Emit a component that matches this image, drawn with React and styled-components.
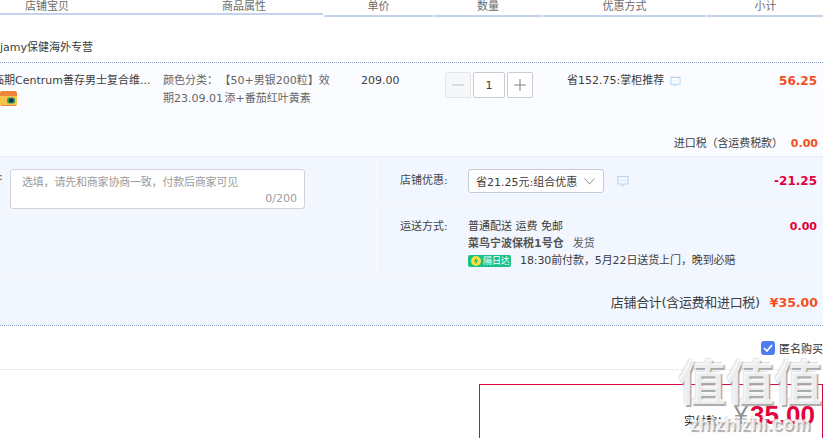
import React from "react";
import styled, { createGlobalStyle } from "styled-components";

const Global = createGlobalStyle`
  html, body { margin: 0; padding: 0; background: #fff; overflow: hidden; height: 438px; }
  body { font-family: "DejaVu Sans", "Noto Sans CJK SC", sans-serif; font-size: 11px; color: #3c3c3c; }
`;
const Page = styled.div`position: relative; width: 823px; height: 438px; overflow: hidden;`;
const Head = styled.div`display: grid; grid-template-columns: 323px 109px 108px 163px 117px; column-gap: 1px; height: 17px;`;
const HeadCell = styled.div`
  height: 15px; border-bottom: 2px solid #c5d2ec; line-height: 13px; color: #6c6c6c;
  text-align: ${p => (p.$left ? "left" : "center")};
  ${p => p.$left && "display:flex; gap:153px; padding-left:25px; box-sizing:border-box;"}
`;
const Shop = styled.div`height: 22px; padding-top: 23px; line-height: 16px; border-bottom: 1px dotted #8ea5cf;`;
const ItemBlock = styled.div`background: #fbfcff; height: 93px; border-bottom: 1px dotted #dfe3ea;`;
const ItemRow = styled.div`display: grid; grid-template-columns: 163px 198px 84px 122px 1fr 100px; height: 70px;`;
const ItemInfo = styled.div`padding-top: 10px; line-height: 15px; overflow: hidden;`;
const Title = styled.div`margin-left: -7px; white-space: nowrap;`;
const CardSlot = styled.div`margin-top: 3px;`;
const Attr = styled.div`padding-top: 9px; width: 172px; line-height: 18px; color: #666; word-spacing: -2px;`;
const Price = styled.div`padding-top: 10px; line-height: 15px;`;
const Stepper = styled.div`display: flex; gap: 2px; padding-top: 9px;`;
const StepBtn = styled.div`
  width: 24px; height: 24px; border: 1px solid ${p => (p.$off ? "#e3e5e9" : "#c9ccd2")}; border-radius: 2px;
  background: ${p => (p.$off ? "#f6f7f8" : "#fff")}; display: flex; align-items: center; justify-content: center;
`;
const StepValue = styled.div`
  width: 30px; height: 24px; border: 1px solid #c9ccd2; border-radius: 2px; background: #fff;
  display: flex; align-items: center; justify-content: center;
`;
const Promo = styled.div`padding-top: 10px; line-height: 15px; display: flex; gap: 6px; align-items: flex-start; white-space: nowrap;`;
const PromoTip = styled.span`margin-top: 3px;`;
const Sub = styled.div`padding: 11px 6px 0 0; text-align: right;`;
const Amount = styled.span`
  font-family: "DejaVu Sans", sans-serif; font-weight: 700; font-size: ${p => p.$size || 11}px;
  color: ${p => p.$color || "#f2501e"}; line-height: 15px;
`;
const TaxRow = styled.div`display: flex; justify-content: flex-end; gap: 15px; padding-right: 5px; line-height: 16px; margin-top: 3px;`;
const TaxLabel = styled.span`margin-right: -7px; letter-spacing: -0.1px;`;
const Section = styled.div`display: grid; grid-template-columns: 377px 1fr; background: #f2f6ff; height: 120px; border-bottom: 1px solid #f8faff;`;
const NoteCell = styled.div`border-right: 1px solid #f8faff; padding: 12px 0 0 10px; position: relative;`;
const Colon = styled.span`position: absolute; left: -1px; top: 13px;`;
const NoteBox = styled.div`
  width: 295px; height: 40px; box-sizing: border-box; background: #fff; border: 1px solid #cfd2d8; border-radius: 3px;
  padding: 5px 7px 0 11px; color: #9c9c9c; line-height: 15px;
`;
const Hint = styled.div`letter-spacing: -0.2px;`;
const Count = styled.div`text-align: right; margin-top: 1px;`;
const Side = styled.div`display: flex; flex-direction: column;`;
const Line = styled.div`display: flex; padding-left: 22px; padding-right: 6px; ${p => p.$border && "border-bottom: 1px solid #f8faff;"} height: ${p => p.$h}px; box-sizing: border-box;`;
const Label = styled.div`width: 68px; padding-top: ${p => p.$top}px; line-height: 16px; color: #444; margin-left: 1px;`;
const Select = styled.div`
  width: 136px; height: 24px; box-sizing: border-box; margin-top: 12px; background: #fff; border: 1px solid #c6cad2; border-radius: 3px;
  display: flex; align-items: center; justify-content: space-between; padding: 0 8px 0 7px;
`;
const Tip = styled.div`margin: 18px 0 0 13px;`;
const Grow = styled.div`flex: 1; text-align: right; padding-top: ${p => p.$top}px;`;
const Ship = styled.div`padding-top: 14px; line-height: 17px; white-space: nowrap;`;
const Wh = styled.div`font-weight: 600; color: #555; span { font-weight: 400; margin-left: 9px; }`;
const Eta = styled.div`display: flex; align-items: center; gap: 9px; letter-spacing: -0.1px;`;
const Badge = styled.span`
  display: inline-flex; align-items: center; gap: 2px; width: 43px; height: 12px; box-sizing: border-box; padding-left: 3px; border-radius: 2px;
  background: #19c087; color: #fff; font-size: 9px; line-height: 12px;
`;
const Total = styled.div`
  height: 45px; background: #f2f6ff; border-bottom: 1px dotted #8ea5cf; display: flex; justify-content: flex-end; align-items: center;
  gap: 10px; padding: 2px 5px 0 0; font-size: 13px; line-height: 16px;
`;
const TotalLabel = styled.span`letter-spacing: -0.32px;`;
const Anon = styled.div`height: 43px; border-bottom: 1px dotted #d9dbe0; display: flex; justify-content: flex-end; align-items: center; gap: 4px; color: #333;`;
const Check = styled.span`width: 14px; height: 14px; border-radius: 3px; background: #4d7df0; display: flex; align-items: center; justify-content: center;`;
const PayWrap = styled.div`padding: 14px 0 0 479px;`;
const PayBox = styled.div`
  height: 70px; border: 1px solid #d9083f; border-bottom: 0; display: flex; justify-content: flex-end; align-items: flex-start;
  padding: 16px 7px 0 0;
`;
const PayLabel = styled.span`margin-top: 11px; color: #222; margin-right: 6px;`;
const Yen = styled.span`font-size: 25px; line-height: 28px; color: #8f8f8f; margin-right: 2px; font-family: "Liberation Sans", sans-serif;`;
const PayAmount = styled.span`font: 700 26px/28px "Liberation Sans", sans-serif; color: #e4003a;`;
const Mark = styled.div`
  position: absolute; left: 677px; top: 344px; width: 146px; text-align: center; pointer-events: none;
  font-family: "Noto Sans CJK SC", sans-serif; color: rgba(255,255,255,.8); text-shadow: 1.5px 1.5px 1px #a9a9a9, -1px -1px 1px #e2e2e2;
`;
const MarkBig = styled.div`font-size: 48px; font-weight: 700; line-height: 70px; white-space: nowrap;`;
const MarkSmall = styled.div`font: 700 18px/18px "Liberation Sans", sans-serif; letter-spacing: .3px; margin-top: 1px; white-space: nowrap; color: rgba(255,255,255,.7);`;

const ChatIcon = ({ size = 11 }) => (
  <svg width={size} height={size} viewBox="0 0 12 12" fill="none" stroke="#b5d3ee" strokeWidth="1.1">
    <path d="M1 1.5h10v7.5H7L5.5 11 4.5 9H1z" />
    <path d="M3.5 5.5h.8M5.7 5.5h.8M7.9 5.5h.8" />
  </svg>
);
const CardIcon = () => (
  <svg width="17" height="15" viewBox="0 0 17 15" style={{ display: "block" }}>
    <rect width="17" height="15" rx="2" fill="#ee8437" />
    <rect y="5" width="17" height="9" fill="#f7c24a" />
    <rect x="7" y="6.5" width="8" height="6" rx="2" fill="#2ea35a" />
    <rect x="9" y="7.5" width="4.5" height="4" rx="1" fill="#1d2a55" />
  </svg>
);

export default function App() {
  return (
    <Page>
      <Global />
      <Head>
        <HeadCell $left><span>店铺宝贝</span><span>商品属性</span></HeadCell>
        <HeadCell>单价</HeadCell>
        <HeadCell>数量</HeadCell>
        <HeadCell>优惠方式</HeadCell>
        <HeadCell>小计</HeadCell>
      </Head>
      <Shop>jamy保健海外专营</Shop>
      <ItemBlock>
        <ItemRow>
          <ItemInfo>
            <Title>临期Centrum善存男士复合维...</Title>
            <CardSlot><CardIcon /></CardSlot>
          </ItemInfo>
          <Attr>颜色分类： 【50+男银200粒】效期23.09.01 添+番茄红叶黄素</Attr>
          <Price>209.00</Price>
          <Stepper>
            <StepBtn $off>
              <svg width="14" height="14" viewBox="0 0 14 14"><path d="M1 7h12" stroke="#cfd2d6" strokeWidth="1.4" /></svg>
            </StepBtn>
            <StepValue>1</StepValue>
            <StepBtn>
              <svg width="14" height="14" viewBox="0 0 14 14"><path d="M1 7h12M7 1v12" stroke="#85888e" strokeWidth="1.1" /></svg>
            </StepBtn>
          </Stepper>
          <Promo>省152.75:掌柜推荐<PromoTip><ChatIcon /></PromoTip></Promo>
          <Sub><Amount $size={12}>56.25</Amount></Sub>
        </ItemRow>
        <TaxRow><TaxLabel>进口税（含运费税款）</TaxLabel><Amount>0.00</Amount></TaxRow>
      </ItemBlock>
      <Section>
        <NoteCell>
          <Colon>:</Colon>
          <NoteBox>
            <Hint>选填，请先和商家协商一致，付款后商家可见</Hint>
            <Count>0/200</Count>
          </NoteBox>
        </NoteCell>
        <Side>
          <Line $border $h={47}>
            <Label $top={16}>店铺优惠:</Label>
            <Select>
              <span>省21.25元:组合优惠</span>
              <svg width="11" height="7" viewBox="0 0 11 7" fill="none" stroke="#8d9097" strokeWidth="1"><path d="M.5.5l5 5.5 5-5.5" /></svg>
            </Select>
            <Tip><ChatIcon size={12} /></Tip>
            <Grow $top={17}><Amount $color="#e4003a" $size={12}>-21.25</Amount></Grow>
          </Line>
          <Line $h={72}>
            <Label $top={15}>运送方式:</Label>
            <Ship>
              <div>普通配送 运费 免邮</div>
              <Wh>菜鸟宁波保税1号仓<span>发货</span></Wh>
              <Eta>
                <Badge>
                  <svg width="10" height="10" viewBox="0 0 10 10"><circle cx="5" cy="5" r="5" fill="#f5e23c" /><path d="M5.8 1.5L3 5.6h1.8L4.2 8.5 7 4.4H5.2z" fill="#19a06e" /></svg>
                  隔日达
                </Badge>
                18:30前付款，5月22日送货上门，晚到必赔
              </Eta>
            </Ship>
            <Grow $top={15}><Amount $color="#e4003a">0.00</Amount></Grow>
          </Line>
        </Side>
      </Section>
      <Total><TotalLabel>店铺合计(含运费和进口税)</TotalLabel><Amount $size={12.5}>¥35.00</Amount></Total>
      <Anon>
        <Check>
          <svg width="10" height="8" viewBox="0 0 10 8" fill="none" stroke="#fff" strokeWidth="1.7"><path d="M1 4l3 3 5-6" /></svg>
        </Check>
        匿名购买
      </Anon>
      <PayWrap>
        <PayBox>
          <PayLabel>实付款：</PayLabel>
          <Yen>¥</Yen>
          <PayAmount>35.00</PayAmount>
        </PayBox>
      </PayWrap>
      <Mark>
        <MarkBig>值值值</MarkBig>
        <MarkSmall>zhizhizhi.com</MarkSmall>
      </Mark>
    </Page>
  );
}
